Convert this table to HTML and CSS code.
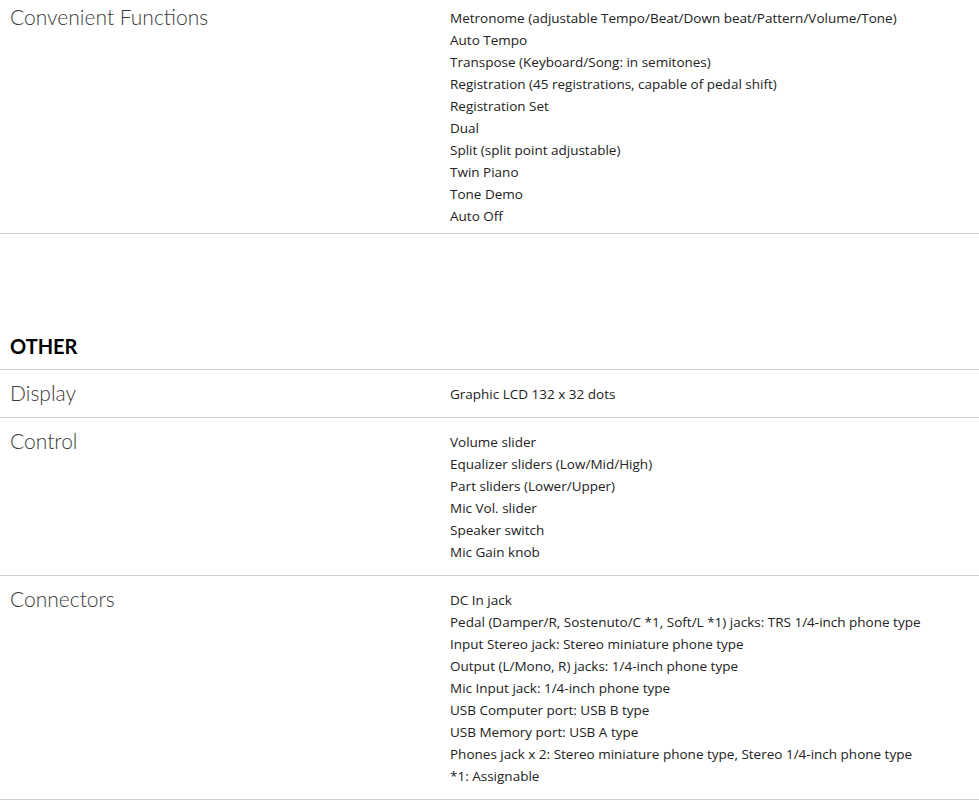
FILE: index.html
```html
<!DOCTYPE html>
<html>
<head>
<meta charset="utf-8">
<link rel="stylesheet" href="styles.css">
</head>
<body>
<div class="page">
  <div class="spec-row first">
    <div class="label">Convenient Functions</div>
    <div class="values">
      <div>Metronome (adjustable Tempo/Beat/Down beat/Pattern/Volume/Tone)</div>
      <div>Auto Tempo</div>
      <div>Transpose (Keyboard/Song: in semitones)</div>
      <div>Registration (45 registrations, capable of pedal shift)</div>
      <div>Registration Set</div>
      <div>Dual</div>
      <div>Split (split point adjustable)</div>
      <div>Twin Piano</div>
      <div>Tone Demo</div>
      <div>Auto Off</div>
    </div>
  </div>

  <h2 class="section-title">OTHER</h2>

  <div class="spec-row">
    <div class="label">Display</div>
    <div class="values">
      <div>Graphic LCD 132 x 32 dots</div>
    </div>
  </div>
  <div class="spec-row">
    <div class="label">Control</div>
    <div class="values">
      <div>Volume slider</div>
      <div>Equalizer sliders (Low/Mid/High)</div>
      <div>Part sliders (Lower/Upper)</div>
      <div>Mic Vol. slider</div>
      <div>Speaker switch</div>
      <div>Mic Gain knob</div>
    </div>
  </div>
  <div class="spec-row">
    <div class="label">Connectors</div>
    <div class="values">
      <div>DC In jack</div>
      <div>Pedal (Damper/R, Sostenuto/C *1, Soft/L *1) jacks: TRS 1/4-inch phone type</div>
      <div>Input Stereo jack: Stereo miniature phone type</div>
      <div>Output (L/Mono, R) jacks: 1/4-inch phone type</div>
      <div>Mic Input jack: 1/4-inch phone type</div>
      <div>USB Computer port: USB B type</div>
      <div>USB Memory port: USB A type</div>
      <div>Phones jack x 2: Stereo miniature phone type, Stereo 1/4-inch phone type</div>
      <div>*1: Assignable</div>
    </div>
  </div>
</div>
</body>
</html>
```
FILE: styles.css
```css
html, body {
  margin: 0;
  padding: 0;
  background: #fff;
}
.page {
  margin-top: -6px;
}
.spec-row {
  display: flex;
  border-bottom: 1px solid #d0d0d0;
  padding: 13px 0 12px 0;
}
.spec-row.first {
  padding-bottom: 6px;
}
.label {
  width: 440px;
  padding-left: 10px;
  font-family: Lato, "Open Sans", sans-serif;
  font-weight: 300;
  font-size: 21px;
  line-height: 20px;
  color: #3a3a3a;
}
.values {
  flex: 1;
  font-family: "Open Sans", Lato, sans-serif;
  font-size: 13.5px;
  line-height: 22px;
  color: #222;
}
.section-title {
  margin: 100px 0 0 0;
  padding: 0 0 11px 10px;
  border-bottom: 1px solid #d0d0d0;
  font-family: Lato, sans-serif;
  font-weight: 700;
  font-size: 20px;
  line-height: 24px;
  color: #000;
}
```
